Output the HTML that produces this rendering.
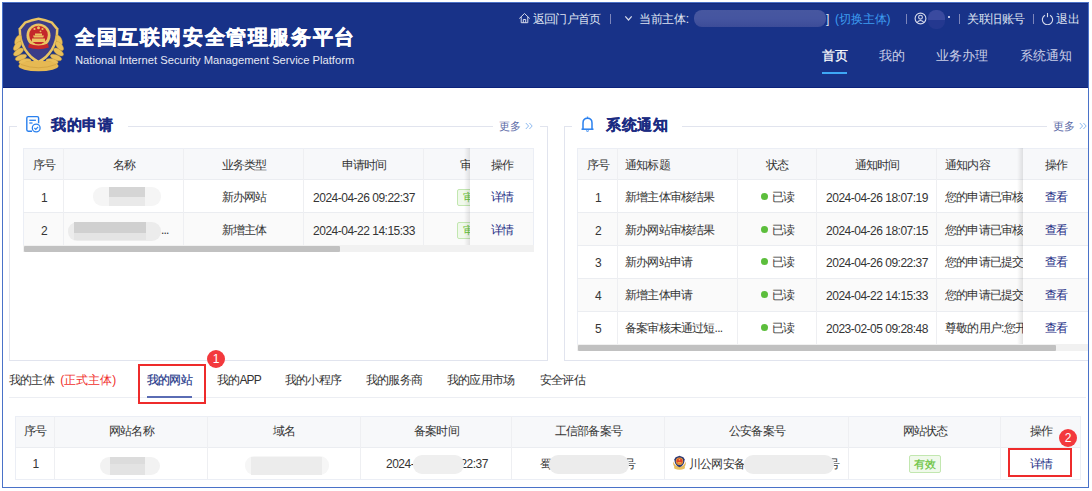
<!DOCTYPE html>
<html><head><meta charset="utf-8">
<style>
*{margin:0;padding:0;box-sizing:border-box}
html,body{width:1092px;height:491px;overflow:hidden;background:#fff;font-family:"Liberation Sans",sans-serif;color:#333}
.a{position:absolute;white-space:nowrap}
#frame{position:absolute;left:2px;top:2px;width:1087px;height:486px;border:1px solid #4a72c8}
#hdr{position:absolute;left:2px;top:2px;width:1087px;height:86px;background:#183288}
#hdr .tl{position:absolute;left:0;right:0;top:1px;height:1px;background:#15287a}
#hdr .bl{position:absolute;left:0;right:0;bottom:0;height:1px;background:#0c237c}
.top{color:#dfe3f1;font-size:12px;letter-spacing:-0.8px;top:12px;line-height:14px}
.sep{position:absolute;top:14px;width:1px;height:10px;background:#7d86bb}
.nav{color:#c9cee6;font-size:13px;top:48px;line-height:15px}

.t{position:absolute;white-space:nowrap;font-size:12px;letter-spacing:-0.8px;line-height:14px;color:#353535;text-align:center}
.d{letter-spacing:-0.5px}
.hl{position:absolute;height:1px;background:#ebedf1}
.vl{position:absolute;width:1px;background:#eeeff2}
.panel{position:absolute;border:1px solid #dfe3ee}
.ptitle{font-size:15px;letter-spacing:0.6px;font-weight:bold;color:#1b2b82;line-height:18px;-webkit-text-stroke:0.25px #1b2b82}
.more{font-size:11px;color:#5b6aa6;line-height:12px}
.more b{font-weight:normal;color:#8db9ef;margin-left:3px}
.lk{color:#1e3189}
.tag{position:absolute;border:1px solid #c2e7b0;background:#f0f9eb;color:#67c23a;font-size:11px;line-height:15px;border-radius:2px;text-align:center;overflow:hidden}
.blur{position:absolute;border-radius:9px}
.dot{display:inline-block;width:7px;height:7px;border-radius:50%;background:#5cbe3c;margin-right:5px;vertical-align:1px;position:relative;left:1px;top:-0.5px}
.tab{position:absolute;font-size:12px;letter-spacing:-0.8px;line-height:14px;color:#333;white-space:nowrap}
.badge{position:absolute;width:18px;height:18px;border-radius:50%;background:#f3393d;color:#fff;font-size:12px;line-height:18px;text-align:center}
</style></head><body><div id="clip" style="position:absolute;left:0;top:0;width:1088px;height:487px;overflow:hidden">
<div id="hdr"><div class="tl"></div><div class="bl"></div></div>


<!-- emblem -->
<svg class="a" style="left:13px;top:16px" width="51" height="56" viewBox="0 0 51 56">
  <path d="M25.5 1.5 Q19 2.5 11.5 5.5 L5.5 12.5 C5.5 30 14 42 25.5 47.5 C37 42 45.5 30 45.5 12.5 L39.5 5.5 Q32 2.5 25.5 1.5Z" fill="#eac462"/>
  <path d="M25.5 4 Q19.5 5 13 7.5 L8 13.5 C8 29 16 39.5 25.5 44.5 C35 39.5 43 29 43 13.5 L38 7.5 Q31.5 5 25.5 4Z" fill="#3b3d88"/>
  <circle cx="25.5" cy="19.5" r="12" fill="#eac462"/>
  <circle cx="25.5" cy="19" r="9.3" fill="#c4282b"/>
  <path d="M19 22.5 h13 v3.5 h-13z" fill="#eac462"/>
  <path d="M20 19.5 h11 l-0.8 2 h-9.4z" fill="#eac462"/>
  <path d="M22 17.5 h7 v2 h-7z" fill="#eac462"/>
  <path d="M16 27.5 q9.5 4 19 0 l0.8 4 q-10.3 3.5 -20.6 0z" fill="#c4282b"/>
  <circle cx="21.5" cy="13" r="1.1" fill="#eac462"/><circle cx="25.5" cy="11.8" r="1.5" fill="#eac462"/><circle cx="29.5" cy="13" r="1.1" fill="#eac462"/><circle cx="27.5" cy="15.3" r="0.9" fill="#eac462"/>
  <ellipse cx="5" cy="24" rx="5.5" ry="2.7" transform="rotate(-65 5 24)" fill="#e9bf5a" stroke="#c99a3a" stroke-width="0.4"/><ellipse cx="46" cy="24" rx="5.5" ry="2.7" transform="rotate(65 46 24)" fill="#e9bf5a" stroke="#c99a3a" stroke-width="0.4"/><ellipse cx="4.5" cy="30" rx="5.5" ry="2.7" transform="rotate(-50 4.5 30)" fill="#e9bf5a" stroke="#c99a3a" stroke-width="0.4"/><ellipse cx="46.5" cy="30" rx="5.5" ry="2.7" transform="rotate(50 46.5 30)" fill="#e9bf5a" stroke="#c99a3a" stroke-width="0.4"/><ellipse cx="5.5" cy="36" rx="5.8" ry="2.7" transform="rotate(-35 5.5 36)" fill="#e9bf5a" stroke="#c99a3a" stroke-width="0.4"/><ellipse cx="45.5" cy="36" rx="5.8" ry="2.7" transform="rotate(35 45.5 36)" fill="#e9bf5a" stroke="#c99a3a" stroke-width="0.4"/><ellipse cx="8" cy="41.5" rx="6" ry="2.7" transform="rotate(-22 8 41.5)" fill="#e9bf5a" stroke="#c99a3a" stroke-width="0.4"/><ellipse cx="43" cy="41.5" rx="6" ry="2.7" transform="rotate(22 43 41.5)" fill="#e9bf5a" stroke="#c99a3a" stroke-width="0.4"/><ellipse cx="12" cy="45.5" rx="6.2" ry="2.7" transform="rotate(-10 12 45.5)" fill="#e9bf5a" stroke="#c99a3a" stroke-width="0.4"/><ellipse cx="39" cy="45.5" rx="6.2" ry="2.7" transform="rotate(10 39 45.5)" fill="#e9bf5a" stroke="#c99a3a" stroke-width="0.4"/><ellipse cx="17" cy="48" rx="6" ry="2.7" transform="rotate(0 17 48)" fill="#e9bf5a" stroke="#c99a3a" stroke-width="0.4"/><ellipse cx="34" cy="48" rx="6" ry="2.7" transform="rotate(0 34 48)" fill="#e9bf5a" stroke="#c99a3a" stroke-width="0.4"/>
  <ellipse cx="25.5" cy="50" rx="20" ry="5.2" fill="#e6b953"/>
  <path d="M8 48.5 Q25.5 55 43 48.5" fill="none" stroke="#c99a3a" stroke-width="0.6"/>
</svg>
<div class="a" style="left:75px;top:24px;font-size:20px;letter-spacing:1.6px;font-weight:bold;color:#fff;line-height:26px;-webkit-text-stroke:0.5px #fff">全国互联网安全管理服务平台</div>
<div class="a" style="left:75px;top:53px;font-size:11.2px;color:#e6e9f4;line-height:14px">National Internet Security Management Service Platform</div>


<!-- top links -->
<svg class="a" style="left:518px;top:12px" width="13" height="12" viewBox="0 0 13 12"><path d="M1.3 6.5 L6.5 1.5 L11.7 6.5 M3.2 5 V10.7 H9.8 V5 M5.3 10.7 V7.5 H7.7 V10.7" fill="none" stroke="#d6daeb" stroke-width="1" stroke-linejoin="round"/></svg>
<div class="a top" style="left:533px">返回门户首页</div>
<div class="sep" style="left:610px"></div>
<svg class="a" style="left:624px;top:15px" width="9" height="7" viewBox="0 0 9 7"><path d="M1.3 1.3 L4.5 5 L7.7 1.3" fill="none" stroke="#d6daeb" stroke-width="1.2"/></svg>
<div class="a top" style="left:639px;letter-spacing:-0.3px">当前主体:</div>
<div class="a" style="left:694px;top:10px;width:132px;height:17px;border-radius:8px;background:linear-gradient(180deg,#4757a0 0,#4555a0 50%,#3c4c98 100%)"></div>
<div class="a top" style="left:826px">]</div>
<div class="a top" style="left:835px;color:#3d9cf0;letter-spacing:-0.1px">(切换主体)</div>
<div class="sep" style="left:906px"></div>
<svg class="a" style="left:914px;top:12px" width="13" height="13" viewBox="0 0 13 13"><circle cx="6.5" cy="6.5" r="5.4" fill="none" stroke="#d6daeb" stroke-width="1.1"/><circle cx="6.5" cy="5.2" r="1.9" fill="none" stroke="#d6daeb" stroke-width="1.1"/><path d="M3 10.6 Q6.5 6.5 10 10.6" fill="none" stroke="#d6daeb" stroke-width="1.1"/></svg>
<div class="a" style="left:928px;top:10px;width:17px;height:19px;border-radius:8px;background:linear-gradient(180deg,#3a4a9f 0,#3a4a9f 55%,#24388f 55%)"></div>
<div class="a" style="left:948px;top:16px;width:1.5px;height:1.5px;background:#b8bfe0"></div>
<div class="sep" style="left:959px"></div>
<div class="a top" style="left:967px;letter-spacing:-0.5px">关联旧账号</div>
<div class="sep" style="left:1033px"></div>
<svg class="a" style="left:1041px;top:12px" width="13" height="13" viewBox="0 0 13 13"><path d="M4 3.2 A5.1 5.1 0 1 0 9 3.2" fill="none" stroke="#d6daeb" stroke-width="1.1"/><path d="M6.5 1 V5.2" stroke="#d6daeb" stroke-width="1.1"/></svg>
<div class="a top" style="left:1056px;letter-spacing:0">退出</div>

<!-- nav -->
<div class="a nav" style="left:822px;color:#fff;-webkit-text-stroke:0.25px #fff">首页</div>
<div class="a" style="left:822px;top:72px;width:25px;height:2px;background:#3ea8f6"></div>
<div class="a nav" style="left:879px">我的</div>
<div class="a nav" style="left:936px">业务办理</div>
<div class="a nav" style="left:1020px">系统通知</div>

<div class="a" style="left:9px;top:126px;width:539px;height:235px;border:1px solid #e1e4ee"></div>
<div class="a" style="left:564px;top:126px;width:560px;height:235px;border:1px solid #e1e4ee"></div>
<div class="a" style="left:17px;top:118px;width:111px;height:14px;background:#fff"></div>
<div class="a" style="left:493px;top:118px;width:47px;height:14px;background:#fff"></div>
<div class="a" style="left:572px;top:118px;width:110px;height:14px;background:#fff"></div>
<div class="a" style="left:1047px;top:118px;width:60px;height:14px;background:#fff"></div>
<svg class="a" style="left:25px;top:115px" width="17" height="18" viewBox="0 0 17 18"><path d="M7 16.2 H3.2 Q1.8 16.2 1.8 14.8 V3 Q1.8 1.6 3.2 1.6 H12.2 Q13.6 1.6 13.6 3 V8.2" fill="none" stroke="#2a80ee" stroke-width="1.4"/><path d="M4.3 5.3 H10.9" stroke="#2a80ee" stroke-width="1.3"/><path d="M4.3 8 H7.5" stroke="#2a80ee" stroke-width="1.3"/><circle cx="11.2" cy="13" r="3.9" fill="none" stroke="#2a80ee" stroke-width="1.3"/><path d="M9.4 13 L10.8 14.4 L13.1 11.9" fill="none" stroke="#2a80ee" stroke-width="1.2"/></svg>
<div class="a ptitle" style="left:51px;top:116px">我的申请</div>
<div class="a more" style="left:499px;top:120px">更多<svg style="margin-left:4px;vertical-align:0px" width="8" height="8" viewBox="0 0 8 8"><path d="M0.8 1 L3.6 4 L0.8 7 M4.4 1 L7.2 4 L4.4 7" fill="none" stroke="#8db9ef" stroke-width="1"/></svg></div>
<svg class="a" style="left:580px;top:115px" width="15" height="18" viewBox="0 0 15 18"><path d="M7.5 1.6 V2.8" stroke="#2a80ee" stroke-width="1.4"/><path d="M3 14 V8 Q3 3.2 7.5 3.2 Q12 3.2 12 8 V14" fill="none" stroke="#2a80ee" stroke-width="1.5"/><path d="M1.5 14.2 H13.5" stroke="#2a80ee" stroke-width="1.5"/><path d="M6.3 15.5 Q7.5 17 8.7 15.5" fill="none" stroke="#2a80ee" stroke-width="1.2"/></svg>
<div class="a ptitle" style="left:606px;top:116px">系统通知</div>
<div class="a more" style="left:1053px;top:120px">更多<svg style="margin-left:4px;vertical-align:0px" width="8" height="8" viewBox="0 0 8 8"><path d="M0.8 1 L3.6 4 L0.8 7 M4.4 1 L7.2 4 L4.4 7" fill="none" stroke="#8db9ef" stroke-width="1"/></svg></div>
<div class="a" style="left:23px;top:148px;width:511px;height:98px;background:#fff;border:1px solid #ebeef5"></div>
<div class="a" style="left:24px;top:149px;width:509px;height:30px;background:#f7f8fa"></div>
<div class="a" style="left:24px;top:213px;width:509px;height:32px;background:#fafafa"></div>
<div class="hl" style="left:23px;top:179px;width:511px"></div>
<div class="hl" style="left:23px;top:212px;width:511px"></div>
<div class="vl" style="left:63px;top:148px;height:97px"></div>
<div class="vl" style="left:183px;top:148px;height:97px"></div>
<div class="vl" style="left:303px;top:148px;height:97px"></div>
<div class="vl" style="left:423px;top:148px;height:97px"></div>
<div class="t" style="left:24px;top:158px;width:40px;text-align:center;">序号</div>
<div class="t" style="left:64px;top:158px;width:120px;text-align:center;">名称</div>
<div class="t" style="left:184px;top:158px;width:120px;text-align:center;">业务类型</div>
<div class="t" style="left:304px;top:158px;width:120px;text-align:center;">申请时间</div>
<div class="t" style="left:460px;top:158px;width:40px;text-align:left;">审核状态</div>
<div class="t d" style="left:24px;top:191px;width:40px;text-align:center;">1</div>
<div class="t d" style="left:24px;top:224px;width:40px;text-align:center;">2</div>
<div class="t" style="left:184px;top:190px;width:120px;text-align:center;">新办网站</div>
<div class="t" style="left:184px;top:223px;width:120px;text-align:center;">新增主体</div>
<div class="t d" style="left:304px;top:191px;width:120px;text-align:center;">2024-04-26 09:22:37</div>
<div class="t d" style="left:304px;top:224px;width:120px;text-align:center;">2024-04-22 14:15:33</div>
<div class="a" style="left:93px;top:187px;width:68px;height:19px;border-radius:9px;background:#f5f5f5"></div>
<div class="a" style="left:109px;top:187px;width:36px;height:10px;background:#d5d5d5"></div>
<div class="a" style="left:109px;top:197px;width:36px;height:9px;background:#e9e9e9"></div>
<div class="a" style="left:68px;top:222px;width:93px;height:19px;border-radius:9px;background:#ececec"></div>
<div class="a" style="left:74px;top:222px;width:72px;height:11px;background:#d0d0d0"></div>
<div class="a" style="left:74px;top:233px;width:72px;height:7px;background:#e4e4e4"></div>
<div class="t" style="left:161px;top:223px;width:12px;text-align:left;">...</div>
<div class="tag" style="left:457px;top:189px;width:34px;height:17px">审核中</div>
<div class="tag" style="left:457px;top:222px;width:34px;height:17px">审核中</div>
<div class="a" style="left:464px;top:148px;width:6px;height:97px;background:linear-gradient(90deg,rgba(0,0,0,0),rgba(0,0,0,0.10))"></div>
<div class="a" style="left:470px;top:148px;width:64px;height:98px;background:#fff;border:1px solid #ebeef5;border-left:none"></div>
<div class="a" style="left:470px;top:149px;width:63px;height:30px;background:#f7f8fa"></div>
<div class="a" style="left:470px;top:213px;width:63px;height:32px;background:#fafafa"></div>
<div class="hl" style="left:470px;top:179px;width:64px"></div>
<div class="hl" style="left:470px;top:212px;width:64px"></div>
<div class="t" style="left:470px;top:158px;width:64px;text-align:center;">操作</div>
<div class="t" style="left:470px;top:190px;width:64px;text-align:center;color:#1a2c84">详情</div>
<div class="t" style="left:470px;top:223px;width:64px;text-align:center;color:#1a2c84">详情</div>
<div class="a" style="left:23px;top:245px;width:511px;height:7px;background:#f1f1f1"></div>
<div class="a" style="left:24px;top:246px;width:316px;height:6px;background:#c1c1c1;border-radius:1px"></div>
<div class="a" style="left:577px;top:148px;width:523px;height:197px;background:#fff;border:1px solid #ebeef5"></div>
<div class="a" style="left:578px;top:149px;width:521px;height:30px;background:#f7f8fa"></div>
<div class="a" style="left:578px;top:213px;width:521px;height:32px;background:#fafafa"></div>
<div class="a" style="left:578px;top:279px;width:521px;height:32px;background:#fafafa"></div>
<div class="hl" style="left:577px;top:179px;width:523px"></div>
<div class="hl" style="left:577px;top:212px;width:523px"></div>
<div class="hl" style="left:577px;top:245px;width:523px"></div>
<div class="hl" style="left:577px;top:278px;width:523px"></div>
<div class="hl" style="left:577px;top:311px;width:523px"></div>
<div class="vl" style="left:617px;top:148px;height:196px"></div>
<div class="vl" style="left:737px;top:148px;height:196px"></div>
<div class="vl" style="left:816px;top:148px;height:196px"></div>
<div class="vl" style="left:936px;top:148px;height:196px"></div>
<div class="t" style="left:578px;top:158px;width:40px;text-align:center;">序号</div>
<div class="t" style="left:625px;top:158px;width:110px;text-align:left;">通知标题</div>
<div class="t" style="left:738px;top:158px;width:79px;text-align:center;">状态</div>
<div class="t" style="left:817px;top:158px;width:120px;text-align:center;">通知时间</div>
<div class="t" style="left:945px;top:158px;width:80px;text-align:left;">通知内容</div>
<div class="t d" style="left:578px;top:191px;width:40px;text-align:center;">1</div>
<div class="t" style="left:625px;top:190px;width:110px;text-align:left;">新增主体审核结果</div>
<div class="t" style="left:738px;top:190px;width:79px;text-align:center;"><span class="dot"></span>已读</div>
<div class="t d" style="left:817px;top:191px;width:120px;text-align:center;">2024-04-26 18:07:19</div>
<div class="t" style="left:945px;top:190px;width:80px;text-align:left;">您的申请已审核</div>
<div class="t d" style="left:578px;top:224px;width:40px;text-align:center;">2</div>
<div class="t" style="left:625px;top:223px;width:110px;text-align:left;">新办网站审核结果</div>
<div class="t" style="left:738px;top:223px;width:79px;text-align:center;"><span class="dot"></span>已读</div>
<div class="t d" style="left:817px;top:224px;width:120px;text-align:center;">2024-04-26 18:07:15</div>
<div class="t" style="left:945px;top:223px;width:80px;text-align:left;">您的申请已审核</div>
<div class="t d" style="left:578px;top:256px;width:40px;text-align:center;">3</div>
<div class="t" style="left:625px;top:255px;width:110px;text-align:left;">新办网站申请</div>
<div class="t" style="left:738px;top:255px;width:79px;text-align:center;"><span class="dot"></span>已读</div>
<div class="t d" style="left:817px;top:256px;width:120px;text-align:center;">2024-04-26 09:22:37</div>
<div class="t" style="left:945px;top:255px;width:80px;text-align:left;">您的申请已提交</div>
<div class="t d" style="left:578px;top:289px;width:40px;text-align:center;">4</div>
<div class="t" style="left:625px;top:288px;width:110px;text-align:left;">新增主体申请</div>
<div class="t" style="left:738px;top:288px;width:79px;text-align:center;"><span class="dot"></span>已读</div>
<div class="t d" style="left:817px;top:289px;width:120px;text-align:center;">2024-04-22 14:15:33</div>
<div class="t" style="left:945px;top:288px;width:80px;text-align:left;">您的申请已提交</div>
<div class="t d" style="left:578px;top:322px;width:40px;text-align:center;">5</div>
<div class="t" style="left:625px;top:321px;width:110px;text-align:left;">备案审核未通过短...</div>
<div class="t" style="left:738px;top:321px;width:79px;text-align:center;"><span class="dot"></span>已读</div>
<div class="t d" style="left:817px;top:322px;width:120px;text-align:center;">2023-02-05 09:28:48</div>
<div class="t" style="left:945px;top:321px;width:80px;text-align:left;">尊敬的用户:您开</div>
<div class="a" style="left:1017px;top:148px;width:6px;height:196px;background:linear-gradient(90deg,rgba(0,0,0,0),rgba(0,0,0,0.10))"></div>
<div class="a" style="left:1023px;top:148px;width:80px;height:197px;background:#fff;border-top:1px solid #ebeef5;border-bottom:1px solid #ebeef5"></div>
<div class="a" style="left:1023px;top:149px;width:80px;height:30px;background:#f7f8fa"></div>
<div class="hl" style="left:1023px;top:179px;width:80px"></div>
<div class="a" style="left:1023px;top:213px;width:80px;height:32px;background:#fafafa"></div>
<div class="hl" style="left:1023px;top:212px;width:80px"></div>
<div class="hl" style="left:1023px;top:245px;width:80px"></div>
<div class="a" style="left:1023px;top:279px;width:80px;height:32px;background:#fafafa"></div>
<div class="hl" style="left:1023px;top:278px;width:80px"></div>
<div class="hl" style="left:1023px;top:311px;width:80px"></div>
<div class="t" style="left:1023px;top:158px;width:66px;text-align:center;">操作</div>
<div class="t" style="left:1023px;top:190px;width:66px;text-align:center;color:#1a2c84">查看</div>
<div class="t" style="left:1023px;top:223px;width:66px;text-align:center;color:#1a2c84">查看</div>
<div class="t" style="left:1023px;top:255px;width:66px;text-align:center;color:#1a2c84">查看</div>
<div class="t" style="left:1023px;top:288px;width:66px;text-align:center;color:#1a2c84">查看</div>
<div class="t" style="left:1023px;top:321px;width:66px;text-align:center;color:#1a2c84">查看</div>
<div class="a" style="left:577px;top:344px;width:523px;height:7px;background:#f1f1f1"></div>
<div class="a" style="left:578px;top:345px;width:478px;height:6px;background:#c1c1c1;border-radius:1px"></div>
<div class="a" style="left:9px;top:397px;width:1077px;height:1px;background:#eceef3"></div>
<div class="tab" style="left:9px;top:373px">我的主体 <span style="color:#f0302c;letter-spacing:0;margin-left:4px">(正式主体)</span></div>
<div class="tab" style="left:147px;top:373px;color:#26388a;-webkit-text-stroke:0.2px #26388a">我的网站</div>
<div class="a" style="left:147px;top:396px;width:45px;height:2px;background:#5a6cb4"></div>
<div class="tab" style="left:217px;top:373px">我的APP</div>
<div class="tab" style="left:285px;top:373px">我的小程序</div>
<div class="tab" style="left:366px;top:373px">我的服务商</div>
<div class="tab" style="left:447px;top:373px">我的应用市场</div>
<div class="tab" style="left:540px;top:373px">安全评估</div>
<div class="a" style="left:138px;top:364px;width:68px;height:40px;border:2px solid #ee2b2b"></div>
<div class="badge" style="left:207px;top:350px">1</div>
<div class="a" style="left:15px;top:416px;width:1066px;height:64px;background:#fff;border:1px solid #ebeef5"></div>
<div class="a" style="left:16px;top:417px;width:1064px;height:30px;background:#f7f8fa"></div>
<div class="hl" style="left:15px;top:447px;width:1066px"></div>
<div class="vl" style="left:54px;top:416px;height:63px"></div>
<div class="vl" style="left:207px;top:416px;height:63px"></div>
<div class="vl" style="left:360px;top:416px;height:63px"></div>
<div class="vl" style="left:511px;top:416px;height:63px"></div>
<div class="vl" style="left:664px;top:416px;height:63px"></div>
<div class="vl" style="left:848px;top:416px;height:63px"></div>
<div class="vl" style="left:1000px;top:416px;height:63px"></div>
<div class="t" style="left:16px;top:424px;width:39px;text-align:center;">序号</div>
<div class="t" style="left:55px;top:424px;width:153px;text-align:center;">网站名称</div>
<div class="t" style="left:208px;top:424px;width:153px;text-align:center;">域名</div>
<div class="t" style="left:361px;top:424px;width:151px;text-align:center;">备案时间</div>
<div class="t" style="left:512px;top:424px;width:153px;text-align:center;">工信部备案号</div>
<div class="t" style="left:665px;top:424px;width:184px;text-align:center;">公安备案号</div>
<div class="t" style="left:849px;top:424px;width:152px;text-align:center;">网站状态</div>
<div class="t" style="left:1001px;top:424px;width:81px;text-align:center;">操作</div>
<div class="t" style="left:16px;top:457px;width:39px;text-align:center;">1</div>
<div class="a" style="left:100px;top:457px;width:60px;height:18px;border-radius:9px;background:#f2f2f2"></div>
<div class="a" style="left:110px;top:457px;width:35px;height:7px;background:#dcdcdc"></div>
<div class="a" style="left:110px;top:464px;width:35px;height:11px;background:#e3e3e3"></div>
<div class="a" style="left:245px;top:456px;width:84px;height:19px;border-radius:9px;background:#f6f6f6"></div>
<div class="a" style="left:251px;top:457px;width:71px;height:18px;background:#ececec"></div>
<div class="t d" style="left:386px;top:457px;width:60px;text-align:left;">2024-04-26 09:22:37</div>
<div class="a" style="left:413px;top:455px;width:51px;height:19px;border-radius:9px;background:#efefef"></div>
<div class="t" style="left:540px;top:457px;width:14px;text-align:left;">蜀</div>
<div class="t" style="left:624px;top:457px;width:14px;text-align:left;">号</div>
<div class="a" style="left:549px;top:455px;width:80px;height:19px;border-radius:9px;background:#ececec"></div>
<svg class="a" style="left:672px;top:455px" width="15" height="15" viewBox="0 0 15 15"><path d="M1.2 6.5 C0.8 11 3.5 14.5 7.5 14.5 C11.5 14.5 14.2 11 13.8 6.5 C12.5 10 10.5 12 7.5 12.2 C4.5 12 2.5 10 1.2 6.5Z" fill="#e3b352"/><ellipse cx="7.5" cy="12.8" rx="5.5" ry="1.8" fill="#e8bf5e"/><path d="M7.5 0.8 L3.6 2.2 L2.4 4.2 C2.4 8.6 4.6 11.2 7.5 12.2 C10.4 11.2 12.6 8.6 12.6 4.2 L11.4 2.2Z" fill="#2f3775"/><circle cx="7.5" cy="6.3" r="3.7" fill="#e0b040"/><circle cx="7.5" cy="6.2" r="3.0" fill="#e2442c"/><path d="M5.6 7.2 h3.8 v1.3 h-3.8z" fill="#f2c850"/><circle cx="7.5" cy="4.8" r="0.8" fill="#f2c850"/></svg>
<div class="t" style="left:689px;top:457px;width:60px;text-align:left;">川公网安备</div>
<div class="t" style="left:828px;top:457px;width:14px;text-align:left;">号</div>
<div class="a" style="left:744px;top:455px;width:90px;height:19px;border-radius:9px;background:#ededed"></div>
<div class="tag" style="left:909px;top:455px;width:32px;height:18px;line-height:16px;-webkit-text-stroke:0.2px #67c23a">有效</div>
<div class="t" style="left:1001px;top:457px;width:81px;text-align:center;color:#1a2c84">详情</div>
<div class="a" style="left:1008px;top:448px;width:64px;height:29px;border:2px solid #ee2b2b"></div>
<div class="badge" style="left:1059px;top:429px">2</div>
</div><div id="frame"></div>
</body></html>
